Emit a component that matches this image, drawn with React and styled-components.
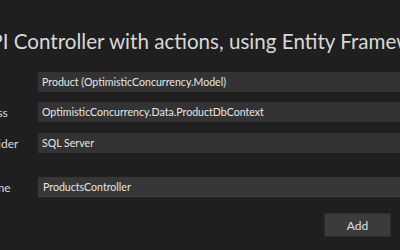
import React from "react";
import styled, { createGlobalStyle } from "styled-components";

const Global = createGlobalStyle`
  html, body { margin: 0; padding: 0; background: #1f1f1f; overflow: hidden; }
  body { font-family: Lato, "Noto Sans", sans-serif; }
`;

const Page = styled.div`
  width: 400px;
  height: 250px;
  overflow: hidden;
  position: relative;
  background: #1f1f1f;
`;

const Inner = styled.div`
  margin-left: -78px;
  width: 478px;
  display: flex;
  flex-direction: column;
`;

const Title = styled.h1`
  margin: 29px 0 0 13px;
  font-family: Lato, sans-serif;
  font-weight: 400;
  font-size: 20.6px;
  line-height: 24px;
  color: #d8d8d8;
  white-space: nowrap;
`;

const Form = styled.div`
  display: grid;
  grid-template-columns: 116px 1fr;
  align-items: center;
  margin-top: 19px;
`;

const Label = styled.div`
  font-size: 12px;
  color: #dcdcdc;
  white-space: nowrap;
  margin-top: ${(p) => p.$mt || 0}px;
  padding-left: ${(p) => p.$shift || 0}px;
`;

const Field = styled.div`
  height: 20px;
  box-sizing: border-box;
  background: ${(p) => (p.$text ? "#373737" : "#333333")};
  border-bottom: 1px solid ${(p) => (p.$text ? "#454545" : "#333333")};
  font-size: 10.6px;
  color: #e6e6e6;
  display: flex;
  align-items: center;
  padding-left: ${(p) => (p.$text ? 5 : 4)}px;
  white-space: nowrap;
  margin-top: ${(p) => p.$mt || 0}px;
  margin-right: -20px;
`;

const Footer = styled.div`
  display: flex;
  justify-content: flex-end;
  padding-right: 9px;
  margin-top: 16px;
`;

const Button = styled.button`
  width: 67px;
  height: 24px;
  background: #3b3b3b;
  border: 1px solid #2c2c2c;
  color: #e0e0e0;
  font-family: Lato, sans-serif;
  font-size: 12px;
  padding: 0;
`;

export default function App() {
  return (
    <Page>
      <Global />
      <Inner>
        <Title>Add API Controller with actions, using Entity Framework</Title>
        <Form>
          <Label>Model class</Label>
          <Field>Product (OptimisticConcurrency.Model)</Field>
          <Label $mt={10}>DbContext class</Label>
          <Field $mt={10}>OptimisticConcurrency.Data.ProductDbContext</Field>
          <Label $mt={11}>Database provider</Label>
          <Field $mt={11}>SQL Server</Field>
          <Label $mt={24} $shift={4}>Controller name</Label>
          <Field $mt={24} $text>ProductsController</Field>
        </Form>
        <Footer>
          <Button>Add</Button>
        </Footer>
      </Inner>
    </Page>
  );
}
